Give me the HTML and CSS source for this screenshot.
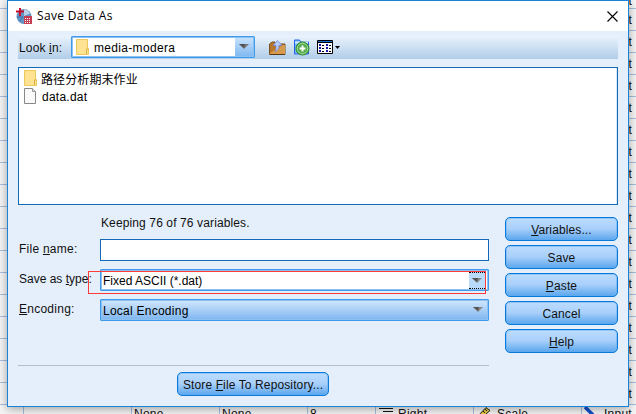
FILE: index.html
```html
<!DOCTYPE html>
<html lang="en">
<head>
<meta charset="utf-8">
<title>Save Data As</title>
<link rel="stylesheet" href="styles.css">
</head>
<body>
<main class="desktop">
  <div class="sheet">
    <div class="role-column">
      <span>Input</span><span>Input</span><span>Input</span><span>Input</span><span>Input</span><span>Input</span><span>Input</span><span>Input</span><span>Input</span><span>Input</span><span>Input</span><span>Input</span><span>Input</span><span>Input</span><span>Input</span><span>Input</span><span>Input</span><span>Input</span><span>Input</span>
    </div>
    <div class="last-row">
      <span></span><span></span><span>None</span><span>None</span><span>8</span>
      <span class="with-icon"><svg width="15" height="12"><path d="M0 1.500h14M4 4.500h10M0 7.500h14" stroke="#111" stroke-width="1"/></svg>Right</span>
      <span class="with-icon"><svg width="16" height="14"><path d="M1 9 9 .5l4 3-9 8z" fill="#e9c943" stroke="#222"/><path d="m6 4 2 2m0-4 2 2" stroke="#222"/></svg>Scale</span>
      <span class="with-icon role"><svg width="16" height="14"><path d="m1 0 9 9" stroke="#104fc8" stroke-width="3.500"/></svg>Input</span>
    </div>
  </div>
  <section class="dialog">
    <header class="titlebar">
      <svg class="app-icon" width="16" height="17" viewBox="0 0 16 17">
        <circle cx="8" cy="8.500" r="7.500" fill="#6297c5"/>
        <path d="M3 13 8 8V1.500a7 7 0 0 1 6 4L8 8z" fill="#b8d1e6"/>
        <path d="M1 9h6M4 13l3-4" stroke="#3a6da7"/>
        <path d="M0 3.500h8M4 0v8" stroke="#c8102e" stroke-width="2"/>
        <path d="M8 8h8v8H8z" fill="#c63d51"/>
        <path d="M9 10.500h6M9 12.500h6M9 14.500h6" stroke="#fff" stroke-dasharray="1 1"/>
      </svg>
      <h1>Save Data As</h1>
      <svg class="close" width="11" height="11" viewBox="0 0 11 11"><path d="m.5.5 10 10m0-10-10 10" stroke="#000" stroke-width="1.100"/></svg>
    </header>
    <div class="content">
      <div class="toolbar">
        <label class="look">Look <u>i</u>n:</label>
        <div class="combo location">
          <svg class="folder" width="13" height="16" viewBox="0 0 13 16"><path d="M.5.500h11v9h1v6H.5z" fill="#ffe393" stroke="#edc85c"/><path d="M10.500 15V10h2" fill="none" stroke="#dcb23e"/></svg>
          <span class="value">media-modera</span>
          <span class="arrow"><svg width="10" height="6"><path d="M0 0h10L5 5z" fill="#777"/><path d="M0 0h6L5 4z" fill="#505050"/></svg></span>
        </div>
        <svg class="tool up" width="17" height="16" viewBox="0 0 17 16">
          <path d="M.5 4 3 2h3l1 2h9v10.500H.5z" fill="#b87628" stroke="#76501f"/><path d="M1 13 14 5h2v9H1z" fill="#d59a4c"/><path d="M1 14.500h15" stroke="#56371a"/>
          <path d="M8.500.5 4 5.500h3c0 3 0 4-1 6 3-1 4-3 4-6h3z" fill="#b8cbff" stroke="#6e87cf" stroke-width=".8"/>
        </svg>
        <svg class="tool new" width="17" height="17" viewBox="0 0 17 17">
          <path d="M1.500 1h5l1 2h8v12h-14z" fill="#77b4f3" stroke="#2463e7"/><path d="M2 3.500h5M9 3.500h6" stroke="#d2e9ff" stroke-width="2"/>
          <circle cx="9.500" cy="9.500" r="6.500" fill="#55ac4d" stroke="#2e8c2c"/><circle cx="9.500" cy="9.500" r="5.300" fill="none" stroke="#a6dc9b"/><path d="M6.500 9.500h6M9.500 6.500v6" stroke="#fff" stroke-width="2"/>
        </svg>
        <svg class="tool view" width="24" height="14" viewBox="0 0 24 14">
          <path d="M.5.500h15v13H.5z" fill="#fff" stroke="#000"/><path d="M1 1.500h14" stroke="#1473c8"/><path d="M1 2.500h14" stroke="#000"/>
          <path d="M2 5h2M9 5h2M2 8h2M9 8h2M2 11h2M9 11h2" stroke="#1717a2" stroke-width="2"/><path d="M5 5.500h2M12 5.500h2M5 8.500h2M12 8.500h2M5 11.500h2M12 11.500h2" stroke="#000"/>
          <path d="M18 6h5l-2.500 3z"/>
        </svg>
      </div>
      <div class="file-list">
        <div class="file">
          <svg class="folder" width="13" height="16" viewBox="0 0 13 16"><path d="M.5.500h11v9h1v6H.5z" fill="#ffe393" stroke="#edc85c"/><path d="M10.500 15V10h2" fill="none" stroke="#dcb23e"/></svg>
          <span class="cjk">路径分析期末作业</span>
        </div>
        <div class="file">
          <svg class="doc" width="12" height="16" viewBox="0 0 12 16"><path d="M.5.500h8l3 3v12H.5z" fill="#fafafa" stroke="#888"/><path d="M8.500.500v3h3" fill="#ddd" stroke="#999"/></svg>
          <span class="name">data.dat</span>
        </div>
      </div>
      <div class="lower">
        <form class="fields">
          <p class="status">Keeping 76 of 76 variables.</p>
          <div class="field"><label class="l-name">File <u>n</u>ame:</label><div class="input"></div></div>
          <div class="field type"><label class="l-type">Save as <u>t</u>ype:</label>
            <div class="combo editable"><span class="value v-type">Fixed ASCII (*.dat)</span><span class="arrow focused"><svg width="10" height="6"><path d="M0 0h10L5 5z" fill="#888"/><path d="M0 0h6L5 4z" fill="#555"/></svg></span></div>
            <div class="marker"></div>
          </div>
          <div class="field"><label class="l-enc"><u>E</u>ncoding:</label>
            <div class="combo filled"><span class="value v-enc">Local Encoding</span><span class="arrow plain"><svg width="10" height="6"><path d="M0 0h10L5 5z" fill="#888"/><path d="M0 0h6L5 4z" fill="#555"/></svg></span></div>
          </div>
          <hr>
          <button type="button" class="store"><span>Store <u>F</u>ile To Repository...</span></button>
        </form>
        <div class="actions">
          <button type="button"><span><u>V</u>ariables...</span></button>
          <button type="button"><span>Save</span></button>
          <button type="button"><span><u>P</u>aste</span></button>
          <button type="button"><span>Cancel</span></button>
          <button type="button"><span><u>H</u>elp</span></button>
        </div>
      </div>
    </div>
  </section>
</main>
</body>
</html>
```
FILE: styles.css
```css
* { box-sizing: border-box; }
body { margin: 0; font: 12px/14px "Liberation Sans", Arial, sans-serif; letter-spacing: .25px; color: #111; }
svg { display: block; flex: none; }
u { text-decoration: underline; text-underline-offset: 1px; text-decoration-thickness: 1px; text-decoration-skip-ink: none; }
.desktop { position: relative; width: 636px; height: 414px; overflow: hidden; }
.sheet { height: 426px; background: #f5f5f5; }
.role-column { height: 405px; display: flex; flex-direction: column; justify-content: flex-end; }
.role-column span { flex: none; height: 22px; padding: 4px 4px 0 0; text-align: right; border-bottom: 1px solid #a5bfdc; }
.role-column span:first-child { height: 9px; line-height: 14px; padding: 0 4px 0 0; overflow: hidden; display: flex; align-items: flex-end; justify-content: flex-end; }
.last-row { display: grid; grid-template-columns: 24px 108px 88px 88px 68px 98px 108px 54px; height: 22px; }
.last-row > span { padding: 2px 0 0 2px; border-right: 1px solid #a5bfdc; white-space: nowrap; }
.last-row .with-icon { display: flex; gap: 4px; padding-left: 3px; }
.last-row .role { border: 0; padding-left: 2px; }

.dialog { position: absolute; left: 7px; top: 0; width: 622px; height: 407px; border: 1px solid #1883d7; background: #e4effb; box-shadow: 0 2px 9px rgba(0,0,0,.35); }
.titlebar { display: flex; align-items: center; height: 30px; padding: 0 10px 0 8px; background: #fff; }
h1 { margin: 0 auto 0 5px; font: 12px/16px "Open Sans", sans-serif; letter-spacing: .32px; color: #000; }
.content { padding: 4px 10px 0; }
.toolbar { display: flex; align-items: center; height: 24px; background: linear-gradient(#ebf4fd, #b1cde8); }
.look { width: 53px; padding: 2px 0 0 1px; letter-spacing: .15px; }
.combo { display: flex; align-items: center; height: 22px; border: 1px solid #3f9bea; border-radius: 1px; background: #fff; box-shadow: inset 0 0 0 1px #8cc1f4; }
.location { width: 184px; padding: 0 1px 0 4px; }
.location .value { margin: 2px auto 0 5px; letter-spacing: .32px; color: #000; }
.arrow { display: flex; align-items: center; justify-content: center; width: 18px; height: 18px; background: linear-gradient(#c5e1fc, #82baf1); }
.up { margin-left: 14px; margin-top: 1px; }
.new { margin-left: 7px; }
.view { margin-left: 7px; }
.file-list { height: 138px; margin-top: 8px; padding: 1px 5px; border: 1px solid #1469b6; box-shadow: inset -1px 0 #d9eafa; background: #fff; }
.file { display: flex; align-items: center; height: 18px; gap: 4px; color: #000; }
.cjk { font: 12px/18px "Noto Sans CJK SC", sans-serif; letter-spacing: .1px; padding-top: 1px; }
.doc + .name { margin-left: 2px; padding-top: 1px; }
.lower { display: flex; gap: 16px; padding-top: 12px; }
.fields { width: 471px; }
.status { margin: -1px 0 9px 83px; letter-spacing: .12px; }
.field { position: relative; display: flex; height: 30px; }
.field label { width: 82px; padding: 3px 0 0 1px; white-space: nowrap; }
.field .l-type { letter-spacing: 0; }
.input { flex: 1; height: 22px; border: 1px solid #1469b6; background: #fff; }
.field .combo { flex: 1; padding: 0 1px; }
.field .value { margin: 2px auto 0 1px; color: #000; }
.field .v-type { letter-spacing: 0; }
.focused { background: #b9daf9; border-top: 1px dotted #000; border-bottom: 1px dotted #000; width: 16px; height: 17px; margin-right: 2px; margin-top: 1px; }
.filled { background: linear-gradient(#d3e7fd, #7eb6f0); }
.plain { background: none; }
.marker { position: absolute; left: 70px; top: 2px; width: 398px; height: 23px; border: 1px solid #ff3b3b; }
hr { height: 1px; margin: 36px 0 6px; border: 0; background: #b5bdc7; }
button { display: block; height: 24px; padding: 0; border: 1px solid #0879d9; border-radius: 5px; background: linear-gradient(#bddcff 0%, #a9d0fb 48%, #5ba6ed 100%); box-shadow: inset 0 0 0 1px rgba(93,171,240,.45); font: inherit; letter-spacing: .12px; color: #111; }
button span { position: relative; top: 1px; }
.store { width: 152px; margin-left: 159px; }
.actions { display: flex; flex-direction: column; gap: 4px; width: 113px; }
```
